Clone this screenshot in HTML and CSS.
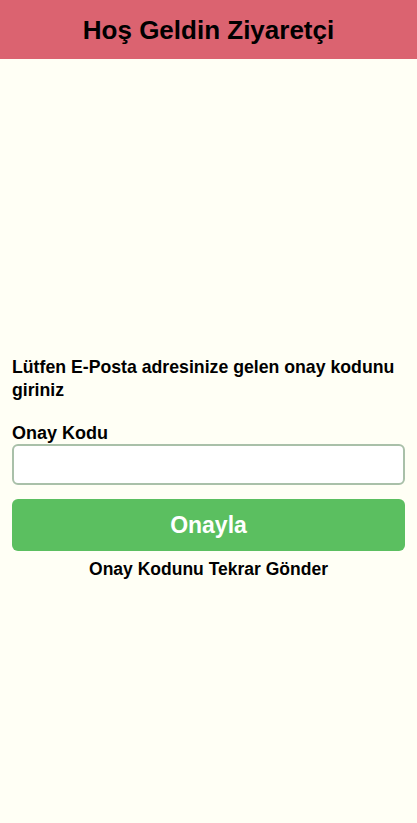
FILE: index.html
```
<!DOCTYPE html>
<html lang="tr">
<head>
<meta charset="utf-8">
<link rel="stylesheet" href="styles.css">
</head>
<body>
<header class="top"><h1 class="title">Hoş Geldin Ziyaretçi</h1></header>
<main class="main">
  <p class="info">Lütfen E-Posta adresinize gelen onay kodunu giriniz</p>
  <label class="label" for="code">Onay Kodu</label>
  <input class="input" id="code" type="text">
  <button class="btn">Onayla</button>
  <div class="resend">Onay Kodunu Tekrar Gönder</div>
</main>
</body>
</html>
```
FILE: styles.css
```
html, body { margin: 0; padding: 0; }
body {
  background: #fffff5;
  font-family: "Liberation Sans", Arial, sans-serif;
  color: #000;
  width: 417px;
  height: 823px;
}
.top {
  background: #db6370;
  height: 59px;
  box-sizing: border-box;
  padding-top: 2px;
  display: flex;
  align-items: center;
  justify-content: center;
}
.title {
  margin: 0;
  font-size: 26px;
  font-weight: bold;
}
.main {
  padding: 297px 12px 0 12px;
  display: flex;
  flex-direction: column;
}
.info {
  margin: 0;
  font-size: 17.7px;
  font-weight: bold;
  line-height: 23px;
}
.label {
  margin-top: 20px;
  font-size: 18px;
  font-weight: bold;
  line-height: 22px;
}
.input {
  box-sizing: border-box;
  height: 41px;
  width: 393px;
  margin: 0;
  border: 2px solid #a9c0a9;
  border-radius: 6px;
  background: #fff;
}
.btn {
  margin-top: 14px;
  height: 52px;
  width: 393px;
  border: none;
  border-radius: 6px;
  background: #5bbf60;
  color: #fff;
  font-family: inherit;
  font-size: 23px;
  font-weight: 900;
}
.resend {
  text-align: center;
  font-size: 17.5px;
  font-weight: bold;
  line-height: 36px;
}
```
